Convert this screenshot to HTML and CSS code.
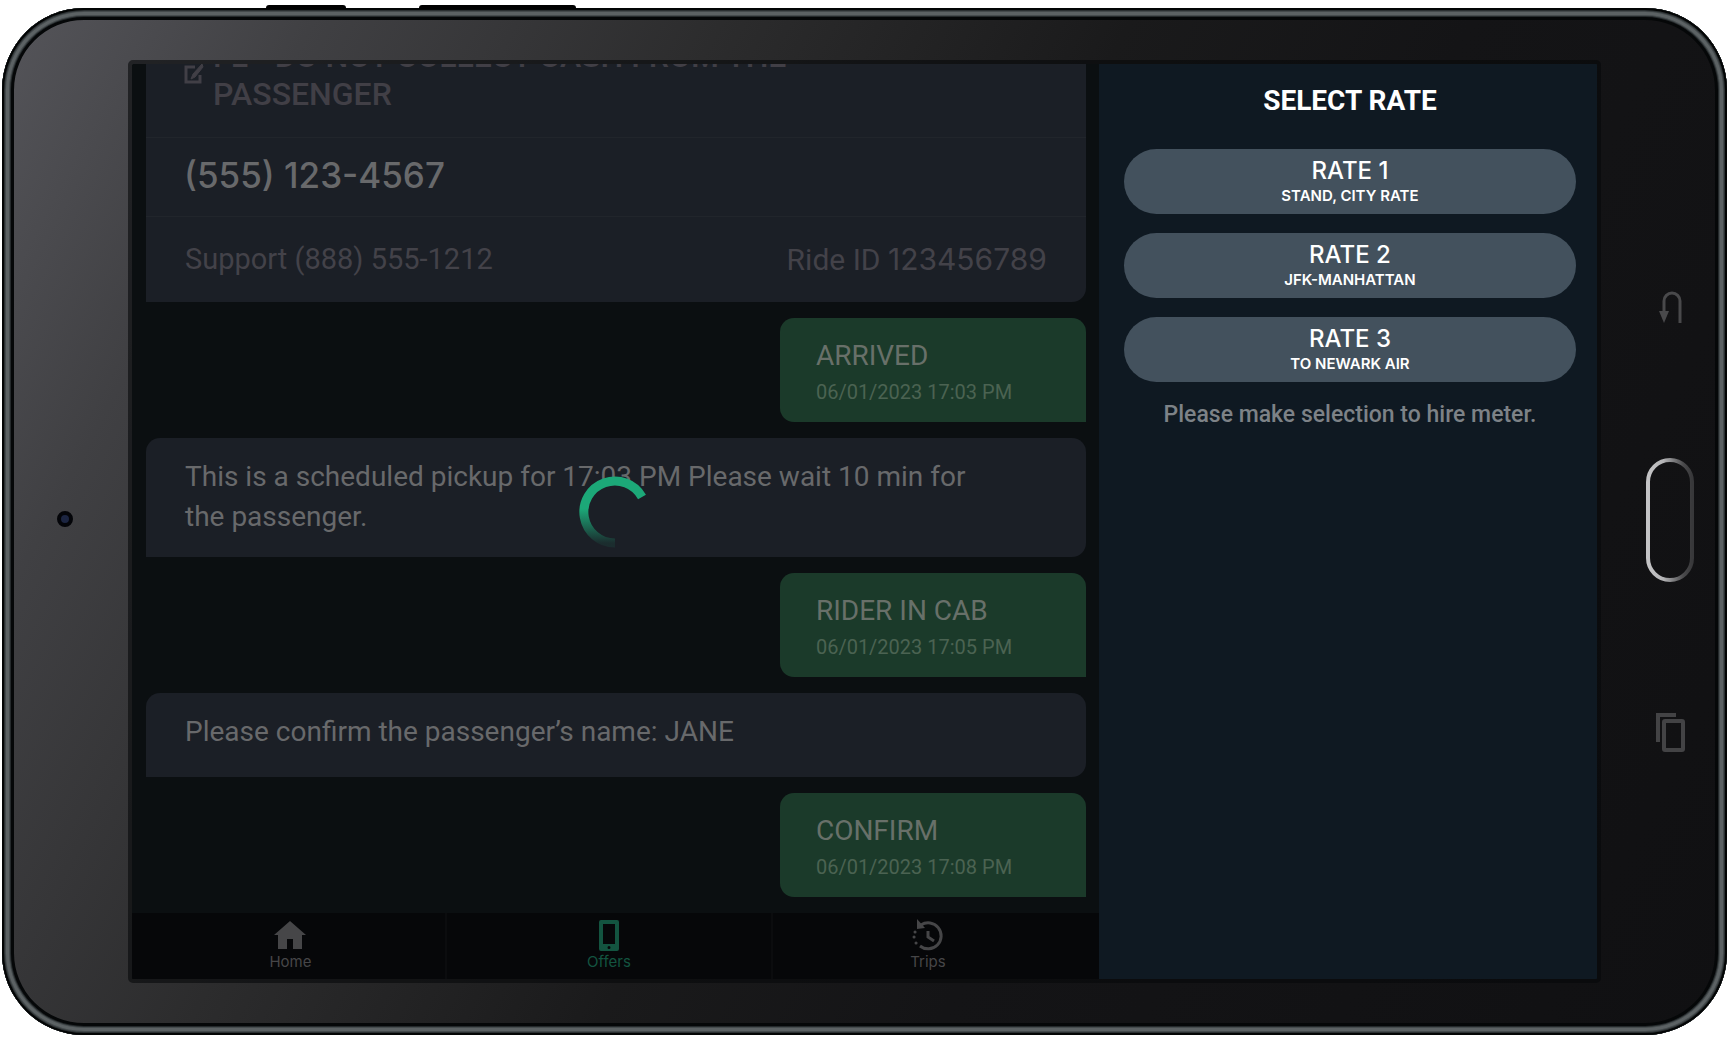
FILE: index.html
```
<!DOCTYPE html>
<html lang="en">
<head>
    <meta charset="UTF-8">
    <meta name="viewport" content="width=device-width, initial-scale=1.0">
    <title>Driver Tablet - Select Rate</title>
    <link rel="stylesheet" href="styles.css">
</head>
<body>
    <div class="side-btn side-power"></div>
    <div class="side-btn side-volume"></div>

    <div class="tablet">
        <div class="bezel-left"><span class="camera"></span></div>

        <div class="screen">
            <main class="chat">
                <div class="messages">
                    <section class="card ride-card">
                        <div class="note">
                            <svg class="note-icon" viewBox="0 0 20 24" fill="none" stroke="currentColor" stroke-width="3">
                                <path d="M11 6H2v15h14V14"/>
                                <path d="M18 3l-9 10-2 5 4-2 8-10z" fill="currentColor" stroke-width="1"/>
                            </svg>
                            <p>FL - DO NOT COLLECT CASH FROM THE PASSENGER</p>
                        </div>
                        <div class="phone">(555) 123-4567</div>
                        <div class="ride-info">
                            <span>Support (888) 555-1212</span>
                            <span class="ride-id">Ride ID <span>123456789</span></span>
                        </div>
                    </section>

                    <div class="reply"><h3>ARRIVED</h3><time>06/01/2023 17:03 PM</time></div>
                    <div class="card text-card">This is a scheduled pickup for 17:03 PM Please wait 10 min for the passenger.</div>
                    <div class="reply"><h3>RIDER IN CAB</h3><time>06/01/2023 17:05 PM</time></div>
                    <div class="card text-card">Please confirm the passenger’s name: JANE</div>
                    <div class="reply"><h3>CONFIRM</h3><time>06/01/2023 17:08 PM</time></div>
                </div>

                <nav class="tabs">
                    <a href="#home">
                        <svg viewBox="0 0 32 32"><path fill="currentColor" d="M16 2L0 16h4v14h9V20h6v10h9V16h4z"/></svg>
                        Home
                    </a>
                    <a href="#offers" class="active">
                        <svg viewBox="0 0 32 32"><path fill="currentColor" fill-rule="evenodd" d="M8 1h16q2 0 2 2v27q0 2-2 2H8q-2 0-2-2V3q0-2 2-2zM10 5v20h12V5zM16 27a1 1 0 1 0 0 3 1 1 0 0 0 0-3z"/></svg>
                        Offers
                    </a>
                    <a href="#trips">
                        <svg viewBox="0 0 32 32" fill="none" stroke="currentColor" stroke-width="3">
                            <path d="M9 6A13 13 0 1 1 8 27"/>
                            <path d="M16 12v6l6 4"/>
                            <path d="M5 0v10l8-1z" fill="currentColor" stroke="none"/>
                            <path d="M3 13h.1M2 18h.1M4 24h.1" stroke-linecap="round"/>
                        </svg>
                        Trips
                    </a>
                </nav>

                <svg class="spinner" viewBox="0 0 72 72" fill="none">
                    <defs>
                        <linearGradient id="fade" x1="0" y1="0" x2="0" y2="1">
                            <stop offset="0.45" stop-color="#1ca878"/>
                            <stop offset="1" stop-color="#1ca878" stop-opacity="0.1"/>
                        </linearGradient>
                    </defs>
                    <path d="M63 21A31 31 0 1 0 36 67" stroke="url(#fade)" stroke-width="9"/>
                </svg>
            </main>

            <aside class="rates">
                <h1>SELECT RATE</h1>
                <button class="rate">RATE 1<small>STAND, CITY RATE</small></button>
                <button class="rate">RATE 2<small>JFK-MANHATTAN</small></button>
                <button class="rate">RATE 3<small>TO NEWARK AIR</small></button>
                <p>Please make selection to hire meter.</p>
            </aside>
        </div>

        <div class="bezel-right">
            <button class="key" aria-label="Back">
                <svg width="24" height="40" viewBox="0 0 24 40" fill="none" stroke="#49494b" stroke-width="3">
                    <path d="M6 24V13a8 8 0 0 1 16 0V35"/>
                    <path d="M1 23h10L6 35z" fill="#49494b" stroke="none"/>
                </svg>
            </button>
            <button class="key" aria-label="Home key">
                <svg width="48" height="124" viewBox="0 0 48 124" fill="none">
                    <defs>
                        <linearGradient id="metal" x1="0" y1="0" x2="1" y2="0">
                            <stop offset="0" stop-color="#c4c4c6"/>
                            <stop offset="0.35" stop-color="#b4b4b6"/>
                            <stop offset="0.8" stop-color="#4a4a4c"/>
                            <stop offset="1" stop-color="#38383a"/>
                        </linearGradient>
                    </defs>
                    <rect x="2" y="2" width="44" height="120" rx="22" stroke="url(#metal)" stroke-width="4"/>
                </svg>
            </button>
            <button class="key" aria-label="Recent apps">
                <svg width="30" height="40" viewBox="0 0 30 40" fill="none" stroke="#434345" stroke-width="4">
                    <path d="M3 30V3h18"/>
                    <rect x="9" y="9" width="19" height="29" rx="1"/>
                </svg>
            </button>
        </div>
    </div>
</body>
</html>
```
FILE: styles.css
```
* { margin: 0; padding: 0; box-sizing: border-box; }
body { background: #fff; font-family: Roboto, sans-serif; padding: 8px 3px 3px 2px; height: 100vh; position: relative; overflow: hidden; }
button { border: none; background: none; font-family: inherit; cursor: pointer; }

/* tablet body */
.tablet {
    display: flex; height: 100%; border-radius: 82px; padding: 52px 12px;
    background: linear-gradient(118deg, #55555a 0%, #404043 14%, #2c2c2d 32%, #1a1a1b 50%, #141416 65%, #101012 100%);
    box-shadow: inset 0 0 0 2px #030505, inset 0 0 0 3px #2a2f31, inset 0 0 0 4px #444a4c, inset 0 0 0 7px #5c6264, inset 0 0 0 8px #464c4e, inset 0 0 0 9px #24292b, inset 0 0 0 12px #050708;
}
.side-btn { position: absolute; top: 5px; height: 4px; background: #000; border-radius: 3px 3px 0 0; }
.side-power { left: 266px; width: 80px; }
.side-volume { left: 419px; width: 157px; }

.bezel-left, .bezel-right { flex: 0 0 auto; display: flex; align-items: center; justify-content: center; }
.bezel-left { width: 114px; }
.camera { width: 16px; height: 16px; border-radius: 50%; border: 4px solid #040509; background: #1c2541; margin: 0 12px 5px 0; }
.bezel-right { width: 114px; flex-direction: column; gap: 130px; padding: 0 0 4px 24px; }
.key { display: flex; }

.screen {
    flex: 1; display: flex; min-width: 0; overflow: hidden;
    border: 4px solid rgba(6, 8, 10, 0.6); border-radius: 5px; background-clip: padding-box;
}

/* dimmed conversation */
.chat { flex: 1; display: flex; flex-direction: column; min-width: 0; background: #0b0f11; position: relative; }
.messages { flex: 1; min-height: 0; overflow: hidden; display: flex; flex-direction: column; justify-content: flex-end; gap: 16px; padding: 0 13px 16px 14px; }
.messages > * { flex-shrink: 0; }

.card { background: #1b1f26; border-radius: 14px 14px 14px 0; color: #68696b; }
.text-card { font-size: 28px; line-height: 40px; min-height: 84px; padding: 19px 100px 20px 39px; }

.note { display: flex; gap: 9px; padding: 0 200px 24px 38px; color: #413f46; font-size: 32px; line-height: 38px; font-weight: 500; }
.note-icon { width: 20px; height: 24px; margin-top: 24px; flex-shrink: 0; }
.phone { border-top: 1px solid #21252b; border-bottom: 1px solid #21252b; padding: 0 38px 4px; font: 500 35px/74px Inter, sans-serif; }
.ride-info { display: flex; justify-content: space-between; padding: 0 39px; font-size: 29px; line-height: 84px; color: #434249; }
.ride-id { font-size: 30px; }
.ride-id span { font-family: Inter, sans-serif; }

.reply { align-self: flex-end; width: 306px; background: #1b3a2a; border-radius: 14px 14px 0 14px; padding: 20px 36px 12px; color: #687069; }
.reply h3 { font-size: 28px; line-height: 36px; font-weight: 400; }
.reply time { display: block; font-size: 20px; line-height: 36px; color: #4b6352; }

.tabs { display: grid; grid-template-columns: 315fr 326fr 326fr; height: 66px; background: #060709; }
.tabs a { display: flex; flex-direction: column; align-items: center; color: #464648; font: 400 15px/20px Inter, sans-serif; text-decoration: none; padding-top: 6px; border-right: 2px solid #0b0c0e; }
.tabs a:first-child { padding-left: 4px; }
.tabs a:last-child { border-right: none; padding-right: 16px; }
.tabs a.active { color: #135440; }
.tabs svg { width: 32px; height: 32px; margin-bottom: 1px; }

.spinner { position: absolute; left: 50%; top: 45%; width: 72px; height: 72px; margin-left: -36px; }

/* rate picker */
.rates { flex: 0 0 34%; background: #0f1922; padding: 18px 21px 0 25px; display: flex; flex-direction: column; align-items: center; }
.rates h1 { font-size: 28px; line-height: 38px; font-weight: 700; color: #fff; margin-bottom: 29px; }
.rate { width: 100%; height: 65px; margin-bottom: 19px; border-radius: 33px; background: #43515d; color: #fff; font: 500 24px/28px Inter, sans-serif; }
.rate small { display: block; font-size: 15px; line-height: 22px; font-weight: 600; }
.rates p { font-size: 23px; line-height: 28px; color: #7d8287; font-weight: 500; }
```
